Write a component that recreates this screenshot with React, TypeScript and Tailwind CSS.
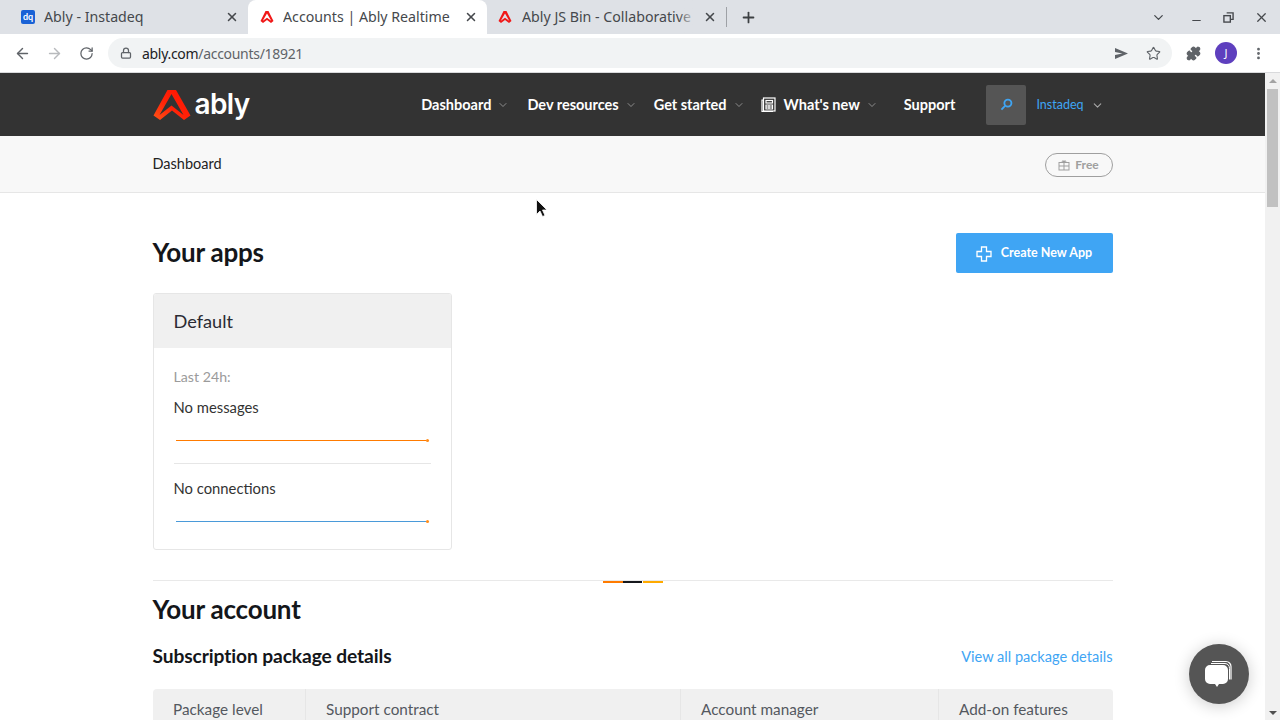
import React from "react";
import { ArrowLeft, ArrowRight, RotateCw, Lock, X, Plus, ChevronDown, Star, Minus, MoreVertical, Puzzle } from "lucide-react";

function AblyMark({ className }: { className?: string }) {
  return (
    <svg viewBox="0 0 38 32" className={className}>
      <defs>
        <linearGradient id="ablyG" x1="0" y1="1" x2="1" y2="0">
          <stop offset="0" stopColor="#ff5416" />
          <stop offset="0.45" stopColor="#ff2208" />
          <stop offset="1" stopColor="#ff1400" />
        </linearGradient>
      </defs>
      <path d="M14.500 1h8.500l14.500 25.500-6.500 4.500-12-9.500-12 9.500-6.500-4.500L14.500 1zM18.500 5L6.500 26l12-9.500 12 9.500-12-21z" fill="url(#ablyG)" fillRule="evenodd" />
    </svg>
  );
}

function Favicon() {
  return (
    <svg viewBox="0 0 14 14" className="w-[14px] h-[14px] shrink-0">
      <path d="M5.500 1h3L13.500 11l-2.500 2L7 10l-4 3-2.500-2L5.500 1zM7 3.500L2.800 10.700 7 7.800l4.200 2.900L7 3.500z" fill="#f01818" fillRule="evenodd" />
    </svg>
  );
}

function Tab({ icon, title, className, fade }: { icon: React.ReactNode; title: string; className: string; fade?: boolean }) {
  return (
    <div className={`relative flex items-center h-[34px] pr-[9px] ${className}`}>
      <span className="shrink-0 flex w-[16px] justify-center">{icon}</span>
      <span className="flex-1 min-w-0 whitespace-nowrap overflow-hidden text-[14.200px] leading-[20px] text-[#45484c] font-['Noto_Sans',sans-serif]">{title}</span>
      {fade && <span className="absolute right-[30px] top-0 bottom-0 w-[18px] bg-gradient-to-r from-transparent to-[#dee1e6]" />}
      <X size={14} strokeWidth={2.6} className="shrink-0 text-[#45484c]" />
    </div>
  );
}

function Nav({ label }: { label: string }) {
  return (
    <span className="flex items-center gap-[6px] text-white text-[14.500px] font-bold whitespace-nowrap">
      {label}
      <ChevronDown size={12} strokeWidth={1.5} className="text-[#a8a8a8] mt-[1px]" />
    </span>
  );
}

function Spark({ color }: { color: string }) {
  return (
    <div className="flex items-center pl-[2px] pr-[2px] h-[5px]">
      <div className="flex-1 h-px" style={{ backgroundColor: color }} />
      <div className="w-[3px] h-[3px] rounded-full bg-[#ff8c1a]" />
    </div>
  );
}

function Cell({ label }: { label: string }) {
  return (
    <div className="pl-[20.500px] pt-[10px] h-full text-[15.300px] leading-[20px] text-[#54585f] border-r border-[#e6e6e6] last:border-r-0">{label}</div>
  );
}

export default function App() {
  return (
    <div className="relative w-[1280px] h-[720px] overflow-hidden flex flex-col bg-white font-['Lato',sans-serif]">
      {/* tab strip */}
      <div className="h-[34px] shrink-0 bg-[#dee1e6] flex items-center pl-[8px] relative">
        <Tab
          title="Ably - Instadeq"
          className="w-[240px] pl-[12px] gap-[8px]"
          icon={<span className="w-[14px] h-[14px] rounded-[2px] bg-[#1a62d6] text-white text-[9px] leading-[13px] font-bold text-center">dq</span>}
        />
        <Tab title="Accounts | Ably Realtime" className="w-[239px] pl-[11px] gap-[8px] bg-white rounded-t-lg" icon={<Favicon />} />
        <Tab title="Ably JS Bin - Collaborative" className="w-[239px] pl-[10px] gap-[9px]" fade icon={<Favicon />} />
        <div className="w-px h-[20px] bg-[#9ea1a6]" />
        <Plus size={17} strokeWidth={2.5} className="text-[#3c4043] ml-[13px]" />
        <div className="flex-1" />
        <div className="flex items-center gap-[20px] h-full pr-[11px] text-[#45484c]">
          <ChevronDown size={15} strokeWidth={2} className="mr-[1px]" />
          <Minus size={13} strokeWidth={2} className="mt-[7px] ml-[3px]" />
          <svg viewBox="0 0 12 12" className="w-[11px] h-[11px]" fill="none" stroke="currentColor" strokeWidth="1.500">
            <path d="M4 1h7v7H8" /><rect x="1" y="4" width="7" height="7" fill="#dee1e6" />
          </svg>
          <X size={15} strokeWidth={2} />
        </div>
      </div>
      {/* toolbar */}
      <div className="h-[38px] shrink-0 bg-white flex items-center relative">
        <ArrowLeft size={17} strokeWidth={2} className="text-[#5f6368] ml-[14px]" />
        <ArrowRight size={17} strokeWidth={2} className="text-[#b8babd] ml-[15px]" />
        <RotateCw size={15} strokeWidth={2} className="text-[#5f6368] ml-[16px]" />
        <div className="ml-[14px] w-[1064px] h-[30px] rounded-full bg-[#f1f3f4] flex items-center pl-[12px] pr-[11px]">
          <Lock size={12} strokeWidth={2.5} className="text-[#5f6368]" />
          <span className="ml-[10px] text-[14px] tracking-[-0.3px] font-['Noto_Sans',sans-serif] text-[#202124]">ably.com<span className="text-[#5f6368]">/accounts/18921</span></span>
          <div className="flex-1" />
          <svg viewBox="0 0 16 14" className="w-[15px] h-[13px] text-[#5f6368]" fill="currentColor"><path d="M1 1l14 6-14 6 0-4.500L9 7 1 5.500z" /></svg>
          <Star size={15} strokeWidth={1.8} className="ml-[17px] text-[#5f6368]" />
        </div>
        <Puzzle size={15} strokeWidth={2} className="ml-[14px] text-[#5f6368] fill-[#5f6368]" />
        <span className="ml-[14px] w-[22px] h-[22px] rounded-full bg-[#5e3fbe] text-white text-[11px] flex items-center justify-center font-['Noto_Sans',sans-serif]">J</span>
        <MoreVertical size={15} strokeWidth={2.5} className="ml-[14px] text-[#5f6368]" />
      </div>
      <div className="h-px shrink-0 bg-[#d9dadc]" />
      {/* page */}
      <div className="flex-1 flex min-h-0">
        <div className="flex-1 min-w-0 overflow-hidden">
          <header className="h-[63px] bg-[#333333] flex justify-center">
            <div className="w-[960px] flex items-center">
              <AblyMark className="w-[38px] h-[32px] mt-[1px]" />
              <span className="ml-[4px] mt-[-1px] text-white text-[28px] leading-none font-semibold tracking-[-0.6px] font-['Inter',sans-serif]">ably</span>
              <div className="ml-auto mr-[9px] flex items-center">
                <Nav label="Dashboard" />
                <span className="ml-[18px]"><Nav label="Dev resources" /></span>
                <span className="ml-[17px]"><Nav label="Get started" /></span>
                <svg viewBox="0 0 15 15" className="ml-[16px] w-[15px] h-[15px]" fill="none" stroke="white" strokeWidth="1.200">
                  <rect x="2.500" y="1" width="11.500" height="13" /><path d="M2.500 3H1v11.500h11" /><rect x="5" y="3.500" width="6.500" height="2.500" /><path d="M5 8h6.500v4H5zM8 8v4M5 10h6.500" />
                </svg>
                <span className="ml-[8px]"><Nav label="What's new" /></span>
                <span className="ml-[26px] text-white text-[14.500px] font-bold">Support</span>
                <span className="ml-[31px] w-[40px] h-[40px] rounded-[2px] bg-[#555555] flex items-center justify-center">
                  <svg viewBox="0 0 14 14" className="w-[13px] h-[13px]" fill="none" stroke="#3fa5f4" strokeWidth="2"><circle cx="8.500" cy="5.500" r="3.800" /><path d="M5.500 8.500L1.500 12.500" /></svg>
                </span>
                <span className="ml-[10px] text-[#3fa5f4] text-[12.500px] mt-[1px]">Instadeq</span>
                <ChevronDown size={13} strokeWidth={2} className="ml-[7px] text-[#a8a8a8] mt-[1px]" />
              </div>
            </div>
          </header>
          <div className="h-[57px] bg-[#f8f8f8] border-b border-[#e6e6e6] flex justify-center">
            <div className="w-[960px] flex items-center justify-between">
              <span className="text-[14.500px] text-[#222222] mt-[-1px]">Dashboard</span>
              <span className="w-[68px] h-[24px] rounded-full border border-[#9f9f9f] flex items-center justify-center gap-[5px] text-[12px] font-bold text-[#9f9f9f] mt-[1px]">
                <svg viewBox="0 0 12 12" className="w-[12px] h-[12px]" fill="none" stroke="#9f9f9f" strokeWidth="1"><rect x="1" y="3.500" width="10" height="7.500" /><path d="M1 7h10M6 3.500V11M3.500 3.500L5 1.500l1 2 1-2 1.500 2" /></svg>
                Free
              </span>
            </div>
          </div>
          <main className="w-[960px] mx-auto">
            <div className="flex items-center justify-between mt-[40px] h-[40px]">
              <h1 className="text-[26px] font-bold text-[#14161a] tracking-[-0.2px] mt-[-2px]">Your apps</h1>
              <button className="w-[157px] h-[40px] rounded-[2px] bg-[#3fa5f4] flex items-center justify-center gap-[9px] text-white text-[12.500px] font-bold pt-[1px]">
                <svg viewBox="0 0 16 16" className="w-[16px] h-[16px]" fill="none" stroke="white" strokeWidth="1.300"><path d="M5.500 1h5v4.500H15v5h-4.500V15h-5v-4.500H1v-5h4.500z" /></svg>
                Create New App
              </button>
            </div>
            <section className="mt-[20px] w-[299px] h-[257px] border border-[#e6e6e6] rounded-[3px] overflow-hidden">
              <div className="h-[54px] bg-[#f0f0f0] flex items-center pl-5 pt-[1px] text-[18.200px] text-[#2b2b33]">Default</div>
              <div className="px-5">
                <p className="mt-[20px] text-[14.200px] leading-[18px] text-[#9b9b9b]">Last 24h:</p>
                <p className="mt-[12px] text-[14.800px] leading-[18px] text-[#333333]">No messages</p>
                <div className="mt-[22px]"><Spark color="#ff7b00" /></div>
                <div className="mt-[20px] h-px bg-[#e6e6e6]" />
                <p className="mt-[15px] text-[14.800px] leading-[18px] text-[#333333]">No connections</p>
                <div className="mt-[22px]"><Spark color="#4a9ad9" /></div>
              </div>
            </section>
            <div className="relative mt-[30px] h-px bg-[#e9e9e9]">
              <div className="absolute left-[450px] top-[1px] flex h-[2px]">
                <span className="w-[20px] bg-[#ff7b00]" />
                <span className="w-[19px] bg-[#16181c]" />
                <span className="w-[1px]" />
                <span className="w-[20px] bg-[#ffaa00]" />
              </div>
            </div>
            <h2 className="mt-[13px] text-[26px] leading-[30px] font-bold text-[#14161a] tracking-[-0.2px]">Your account</h2>
            <div className="mt-[20px] flex items-center justify-between h-[24px]">
              <h3 className="text-[19.200px] font-bold text-[#14161a] tracking-[-0.1px]">Subscription package details</h3>
              <a className="text-[14.600px] text-[#3fa5f4] mt-[1px]">View all package details</a>
            </div>
            <div className="mt-[21px] h-[40px] bg-[#f0f0f0] rounded-t-[4px] grid grid-cols-[153px_375px_258px_174px] items-start">
              <Cell label="Package level" />
              <Cell label="Support contract" />
              <Cell label="Account manager" />
              <Cell label="Add-on features" />
            </div>
          </main>
        </div>
        {/* scrollbar */}
        <div className="w-[15px] shrink-0 bg-[#f1f1f1] relative">
          <div className="absolute left-[2px] top-[16px] w-[11px] h-[118px] bg-[#c1c1c1]" />
          <div className="absolute left-[4px] top-[6px] w-0 h-0 border-x-[4px] border-x-transparent border-b-[4px] border-b-[#a3a3a3]" />
          <div className="absolute left-[4px] bottom-[5px] w-0 h-0 border-x-[4px] border-x-transparent border-t-[4px] border-t-[#505050]" />
        </div>
      </div>
      {/* chat launcher */}
      <div className="absolute left-[1189px] top-[644px] w-[60px] h-[60px] rounded-full bg-[#555555] shadow-[0_2px_16px_rgba(0,0,0,0.2)] flex items-center justify-center">
        <svg viewBox="0 0 32 32" className="w-[32px] h-[32px]">
          <path d="M9 3.500h14a5 5 0 0 1 5 5v13" fill="none" stroke="#ffffff" strokeWidth="1.200" />
          <path d="M8 5.500h14a5 5 0 0 1 4.500 5v11" fill="none" stroke="#ffffff" strokeWidth="1" />
          <path d="M7 7h13a5 5 0 0 1 5 5v9a5 5 0 0 1-5 5h-4l-2 3-2-3H7a5 5 0 0 1-5-5v-9a5 5 0 0 1 5-5z" fill="#ffffff" />
        </svg>
      </div>
      {/* mouse cursor */}
      <svg viewBox="0 0 12 18" className="absolute left-[536px] top-[199px] w-[12px] h-[18px]">
        <path d="M0.500 0.500v15l3.500-3.500 2.500 5.500 2.500-1-2.500-5.500h4.500z" fill="#111" stroke="#fff" strokeWidth="0.800" />
      </svg>
    </div>
  );
}
